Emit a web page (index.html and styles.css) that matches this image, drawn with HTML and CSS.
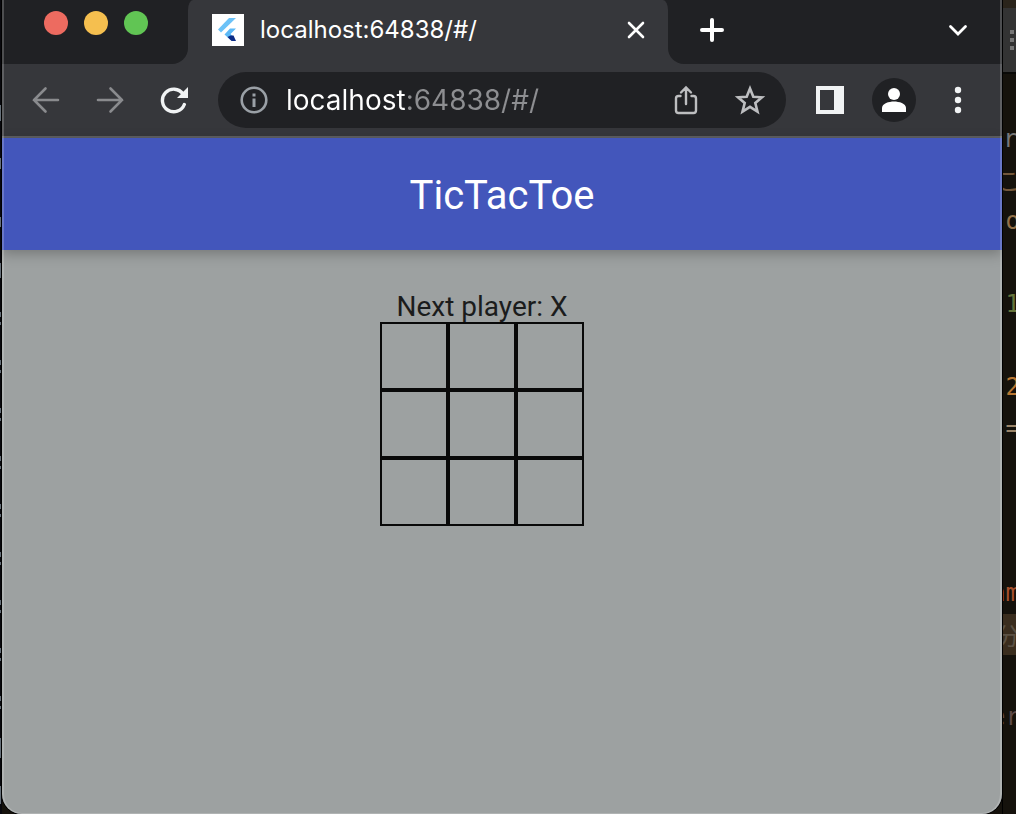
FILE: index.html
```
<!DOCTYPE html>
<html lang="en">
<head>
<meta charset="utf-8">
<title>TicTacToe</title>
<link rel="stylesheet" href="styles.css">
</head>
<body>
<div class="desktop">
  <div class="edge-left" aria-hidden="true"></div>

  <div class="window">
    <div class="tab-strip">
      <div class="strip-left">
        <button class="light light-red" aria-label="Close window"></button>
        <button class="light light-yellow" aria-label="Minimize window"></button>
        <button class="light light-green" aria-label="Zoom window"></button>
      </div>
      <div class="tab-slot">
        <div class="tab">
          <svg class="favicon" width="32" height="32" viewBox="0 0 32 32" aria-hidden="true">
            <rect width="32" height="32" fill="#fff"/>
            <path d="M17 4h7L9 18.500l-3-3z" fill="#6cc2f7"/>
            <path d="M18 14.500h6l-5.500 5.500 3 3-3 3-6-5.500z" fill="#5cb9f6"/>
            <path d="M15.500 23l3-1.500h3L24 27h-4.500z" fill="#0b2b86"/>
          </svg>
          <span class="tab-title">localhost:64838/#/</span>
          <button class="icon-button" aria-label="Close tab">
            <svg width="24" height="24" viewBox="0 0 24 24"><path d="M5 5l14 14M19 5L5 19" fill="none" stroke="#fff" stroke-width="2.6" stroke-linecap="round"/></svg>
          </button>
        </div>
      </div>
      <div class="strip-right">
        <button class="icon-button" aria-label="New tab">
          <svg width="28" height="28" viewBox="0 0 28 28"><path d="M14 4v20M4 14h20" fill="none" stroke="#fff" stroke-width="4" stroke-linecap="round"/></svg>
        </button>
        <button class="icon-button" aria-label="Search tabs">
          <svg width="24" height="24" viewBox="0 0 24 24"><path d="M4.500 8.500L12 16l7.500-7.500" fill="none" stroke="#fff" stroke-width="2.800" stroke-linecap="round"/></svg>
        </button>
      </div>
    </div>

    <div class="toolbar">
      <button class="icon-button" aria-label="Back">
        <svg width="28" height="28" viewBox="0 0 28 28"><path d="M26 14H2M13.500 2.500L2 14l11.500 11.500" fill="none" stroke="#8a8b8e" stroke-width="2.600" stroke-linecap="round"/></svg>
      </button>
      <button class="icon-button" aria-label="Forward">
        <svg width="28" height="28" viewBox="0 0 28 28"><path d="M2 14h24M14.500 2.500L26 14 14.500 25.500" fill="none" stroke="#8a8b8e" stroke-width="2.600" stroke-linecap="round"/></svg>
      </button>
      <button class="icon-button" aria-label="Reload">
        <svg width="28" height="28" viewBox="0 0 28 28"><path d="M23 8A11.300 11.300 0 1 0 24.300 18.500" fill="none" stroke="#f1f3f4" stroke-width="3.400" stroke-linecap="round"/><path d="M28 1v11H17z" fill="#f1f3f4"/></svg>
      </button>
      <div class="omnibox">
        <svg class="info" width="28" height="28" viewBox="0 0 28 28" aria-hidden="true"><circle cx="14" cy="14" r="12.300" fill="none" stroke="#9aa0a6" stroke-width="2.600"/><path d="M12.500 7.500h3v3h-3zM12.500 12.500h3V21h-3z" fill="#9aa0a6"/></svg>
        <input class="address" type="text" aria-label="Address" value="localhost:64838/#/">
        <button class="icon-button" aria-label="Share">
          <svg width="28" height="32" viewBox="0 0 28 32"><path d="M8.500 12H6.500Q4 12 4 14.500v12Q4 29 6.500 29h15q2.500 0 2.500-2.500v-12Q24 12 21.500 12h-2M14 20V4M9 8.500l5-5 5 5" fill="none" stroke="#bdbec0" stroke-width="2.400" stroke-linecap="round"/></svg>
        </button>
        <button class="icon-button" aria-label="Bookmark">
          <svg width="32" height="32" viewBox="0 0 32 32"><path d="M16 4.500l3.300 8.200 8.700.6-6.700 5.700 2.200 8.700L16 22.900l-7.500 4.800L10.700 19 4 13.300l8.700-.6z" fill="none" stroke="#bdbec0" stroke-width="2.600"/></svg>
        </button>
      </div>
      <button class="icon-button" aria-label="Side panel">
        <svg width="28" height="28" viewBox="0 0 28 28"><path d="M0 0h28v28H0zM4 4v20h14V4z" fill="#f1f3f4" fill-rule="evenodd"/></svg>
      </button>
      <button class="icon-button avatar" aria-label="Profile">
        <svg width="24" height="24" viewBox="0 0 24 24"><circle cx="12" cy="6" r="6" fill="#fff"/><path d="M0 24v-4c0-4.500 7-6.500 12-6.500s12 2 12 6.500v4z" fill="#fff"/></svg>
      </button>
      <button class="icon-button" aria-label="Menu">
        <svg width="28" height="28" viewBox="0 0 28 28" fill="#f1f3f4"><circle cx="14" cy="4" r="3.200"/><circle cx="14" cy="14" r="3.200"/><circle cx="14" cy="24" r="3.200"/></svg>
      </button>
    </div>

    <header class="app-bar"><h1 class="app-title">TicTacToe</h1></header>
    <main class="game">
      <p class="status">Next player: X</p>
      <div class="board">
        <button class="cell" aria-label="Row 1, column 1"></button>
        <button class="cell" aria-label="Row 1, column 2"></button>
        <button class="cell" aria-label="Row 1, column 3"></button>
        <button class="cell" aria-label="Row 2, column 1"></button>
        <button class="cell" aria-label="Row 2, column 2"></button>
        <button class="cell" aria-label="Row 2, column 3"></button>
        <button class="cell" aria-label="Row 3, column 1"></button>
        <button class="cell" aria-label="Row 3, column 2"></button>
        <button class="cell" aria-label="Row 3, column 3"></button>
      </div>
    </main>
  </div>

  <div class="editor" aria-hidden="true">
    <div class="editor-bar"><svg width="4" height="20" viewBox="0 0 4 20" fill="#777"><path d="M0 0h4v4H0zM0 8h4v4H0zM0 16h4v4H0z"/></svg></div>
    <div class="code">
      <span class="line gray start">r</span>
      <span class="line brown">こ</span>
      <span class="line tan">:o</span>
      <span class="line"></span>
      <span class="line green">'1</span>
      <span class="line"></span>
      <span class="line orange">2</span>
      <span class="line sand">=</span>
      <span class="line"></span>
      <span class="line"></span>
      <span class="line"></span>
      <span class="line red">am</span>
      <span class="line marked">分</span>
      <span class="line"></span>
      <span class="line mauve">er</span>
    </div>
  </div>
</div>
</body>
</html>
```
FILE: styles.css
```
* {
  box-sizing: border-box;
}

body {
  margin: 0;
  background: #15120c;
  font-family: Inter, "Liberation Sans", sans-serif;
}

button {
  padding: 0;
  border: 0;
  background: none;
}

svg {
  display: block;
}

.desktop {
  display: flex;
  height: 100vh;
  overflow: hidden;
}

/* Sliver of the editor behind the window */
.edge-left {
  width: 2px;
  flex: none;
  background:
    linear-gradient(#66707a, #66707a) 0 105px / 1px 16px no-repeat,
    linear-gradient(#66707a, #66707a) 0 158px / 1px 11px no-repeat,
    linear-gradient(#66707a, #66707a) 0 217px / 1px 10px no-repeat,
    linear-gradient(#66707a, #66707a) 0 263px / 1px 15px no-repeat,
    linear-gradient(#66707a, #66707a) 0 738px / 1px 20px no-repeat,
    linear-gradient(#66707a, #66707a) 0 786px / 1px 18px no-repeat,
    repeating-linear-gradient(#08080d 0 24px, #66707a 24px 29px, #08080d 29px 34px, #66707a 34px 37px, #08080d 37px 48px) 0 288px / 1px 434px no-repeat,
    #08080d;
}

.window {
  position: relative;
  flex: 1;
  min-width: 0;
  display: flex;
  flex-direction: column;
  overflow: hidden;
  border-radius: 0 0 20px 20px;
  background: #36373b;
  box-shadow: 0 0 0 1px #000;
}

.window::after {
  content: "";
  position: absolute;
  inset: 0;
  border: 2px solid rgba(255, 255, 255, 0.2);
  border-top: 0;
  border-bottom-width: 1px;
  border-radius: 0 0 20px 20px;
  pointer-events: none;
}

.tab-strip {
  display: flex;
  height: 64px;
}

.strip-left,
.strip-right {
  display: flex;
  background: #202124;
}

.strip-left {
  width: 186px;
  padding: 11px 0 0 42px;
  gap: 16px;
  border-bottom-right-radius: 16px;
}

.light {
  width: 24px;
  height: 24px;
  border-radius: 50%;
}

.light-red {
  background: #ed6b60;
}

.light-yellow {
  background: #f5bf4f;
}

.light-green {
  background: #61c554;
}

.tab-slot {
  width: 480px;
  background: linear-gradient(#202124 12px, #36373b 12px);
}

.tab {
  display: flex;
  align-items: center;
  height: 60px;
  padding: 0 10px 0 24px;
  border-radius: 5px 5px 0 0 / 10px 10px 0 0;
  background: #36373b;
  color: #fff;
}

.tab-title {
  flex: 1;
  margin-left: 16px;
  font-size: 24px;
  line-height: 32px;
}

.strip-right {
  flex: 1;
  align-items: center;
  justify-content: space-between;
  padding: 0 22px 4px;
  border-bottom-left-radius: 16px;
}

.icon-button {
  display: flex;
  flex: none;
  align-items: center;
  justify-content: center;
  width: 44px;
  height: 44px;
}

.avatar {
  border-radius: 50%;
  background: #202124;
}

.toolbar {
  display: flex;
  align-items: center;
  gap: 20px;
  height: 74px;
  padding: 0 22px;
  border-bottom: 2px solid #5e5f62;
}

.omnibox {
  display: flex;
  flex: 1;
  align-items: center;
  min-width: 0;
  height: 56px;
  margin: 0 2px;
  padding: 0 14px 0 22px;
  border-radius: 28px;
  background: #202124;
}

.omnibox .icon-button + .icon-button {
  margin-left: 20px;
}

.info {
  flex: none;
}

.address {
  flex: 1;
  min-width: 0;
  margin-left: 18px;
  padding: 0;
  border: 0;
  outline: 0;
  background: linear-gradient(90deg, #fff 121px, #8d8e91 121px);
  -webkit-background-clip: text;
  background-clip: text;
  color: transparent;
  font-family: inherit;
  font-size: 28px;
  line-height: 36px;
}

.app-bar {
  position: relative;
  display: flex;
  align-items: center;
  justify-content: center;
  height: 112px;
  padding-top: 4px;
  background: #4356bb;
  box-shadow: 0 4px 12px rgba(0, 0, 0, 0.25);
}

.app-title {
  margin: 0;
  color: #fff;
  font-family: Roboto, sans-serif;
  font-size: 40px;
  font-weight: 400;
  line-height: 48px;
}

.game {
  flex: 1;
  display: flex;
  flex-direction: column;
  align-items: center;
  padding: 42px 40px 0 0;
  background: #9da1a1;
}

.status {
  margin: 0;
  color: #1b1c1c;
  font-family: Roboto, sans-serif;
  font-size: 28px;
  line-height: 30px;
}

.board {
  display: grid;
  grid-template-columns: repeat(3, 68px);
  grid-auto-rows: 68px;
}

.cell {
  border: 2px solid #090909;
}

/* Code showing to the right of the window */
.editor {
  width: 14px;
  flex: none;
  overflow: hidden;
  border-top: 8px solid #2a241b;
  border-left: 1px solid #000;
}

.editor-bar {
  display: flex;
  justify-content: center;
  height: 66px;
  padding: 22px 0 0 4px;
  border-bottom: 2px solid #090907;
  background: #333;
}

.code {
  display: grid;
  grid-template-rows: repeat(15, 1fr);
  width: 17px;
  height: 620px;
  margin-top: 44px;
  font-family: "DejaVu Sans Mono", "Noto Sans CJK JP", monospace;
  font-size: 24px;
}

.line {
  display: flex;
  align-items: center;
  justify-content: flex-end;
  overflow: hidden;
}

.start {
  justify-content: flex-start;
}

.gray {
  color: #777;
}

.brown {
  color: #73573a;
}

.tan {
  color: #927149;
}

.green {
  color: #65743b;
}

.orange {
  color: #b87632;
}

.sand {
  color: #9a8468;
}

.red {
  color: #a6502d;
}

.marked {
  background: #3a2d1e;
  color: #5b5144;
}

.mauve {
  color: #5d4947;
}
```
